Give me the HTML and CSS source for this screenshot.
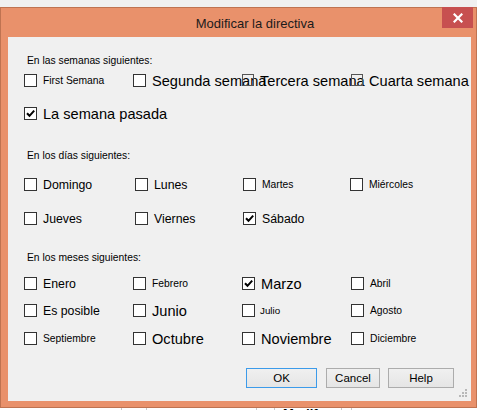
FILE: index.html
```html
<!DOCTYPE html>
<html lang="es">
<head>
<meta charset="utf-8">
<title>Modificar la directiva</title>
<link rel="stylesheet" href="styles.css">
</head>
<body>
<div class="page">
  <div class="topstrip"></div>
  <div class="window">
    <div class="titlebar">
      <span class="title">Modificar la directiva</span>
      <button class="close" aria-label="Cerrar">
        <svg width="10" height="10" viewBox="0 0 10 10"><path d="M1.5 1.5 L8.5 8.5 M8.5 1.5 L1.5 8.5" stroke="#fff" stroke-width="2.2" stroke-linecap="square"/></svg>
      </button>
    </div>
    <div class="client">
      <div class="hdr h1">En las semanas siguientes:</div>
      <div class="grid r-w1">
        <label class="item"><span class="cb"></span><span class="s">First Semana</span></label>
        <label class="item"><span class="cb"></span><span class="l">Segunda semana</span></label>
        <label class="item"><span class="cb ghost"></span><span class="l">Tercera semana</span></label>
        <label class="item"><span class="cb ghost"></span><span class="l">Cuarta semana</span></label>
      </div>
      <div class="grid r-w2">
        <label class="item"><span class="cb"><svg viewBox="0 0 11 11" width="11" height="11"><path d="M2 5.2 L4.5 7.8 L9.2 2.6" fill="none" stroke="#000" stroke-width="2"/></svg></span><span class="l">La semana pasada</span></label>
      </div>

      <div class="hdr h2">En los días siguientes:</div>
      <div class="grid days r-d1">
        <label class="item"><span class="cb"></span><span class="m">Domingo</span></label>
        <label class="item"><span class="cb"></span><span class="m">Lunes</span></label>
        <label class="item"><span class="cb"></span><span class="s">Martes</span></label>
        <label class="item"><span class="cb"></span><span class="s">Miércoles</span></label>
      </div>
      <div class="grid days r-d2">
        <label class="item"><span class="cb"></span><span class="m">Jueves</span></label>
        <label class="item"><span class="cb"></span><span class="m">Viernes</span></label>
        <label class="item"><span class="cb"><svg viewBox="0 0 11 11" width="11" height="11"><path d="M2 5.2 L4.5 7.8 L9.2 2.6" fill="none" stroke="#000" stroke-width="2"/></svg></span><span class="m">Sábado</span></label>
      </div>

      <div class="hdr h3">En los meses siguientes:</div>
      <div class="grid r-m1">
        <label class="item"><span class="cb"></span><span class="m">Enero</span></label>
        <label class="item"><span class="cb"></span><span class="s">Febrero</span></label>
        <label class="item"><span class="cb"><svg viewBox="0 0 11 11" width="11" height="11"><path d="M2 5.2 L4.5 7.8 L9.2 2.6" fill="none" stroke="#000" stroke-width="2"/></svg></span><span class="l">Marzo</span></label>
        <label class="item"><span class="cb"></span><span class="s">Abril</span></label>
      </div>
      <div class="grid r-m2">
        <label class="item"><span class="cb"></span><span class="m">Es posible</span></label>
        <label class="item"><span class="cb"></span><span class="l">Junio</span></label>
        <label class="item"><span class="cb"></span><span class="s xs">Julio</span></label>
        <label class="item"><span class="cb"></span><span class="s">Agosto</span></label>
      </div>
      <div class="grid r-m3">
        <label class="item"><span class="cb"></span><span class="s">Septiembre</span></label>
        <label class="item"><span class="cb"></span><span class="l">Octubre</span></label>
        <label class="item"><span class="cb"></span><span class="l">Noviembre</span></label>
        <label class="item"><span class="cb"></span><span class="s">Diciembre</span></label>
      </div>

      <div class="buttons">
        <button class="btn btn-ok">OK</button>
        <button class="btn btn-cancel">Cancel</button>
        <button class="btn btn-help">Help</button>
      </div>
      <svg class="grip" width="8" height="8" viewBox="0 0 8 8">
        <rect x="6" y="0" width="2" height="2" fill="#b8b8b8"/>
        <rect x="3" y="3" width="2" height="2" fill="#b8b8b8"/>
        <rect x="6" y="3" width="2" height="2" fill="#b8b8b8"/>
        <rect x="0" y="6" width="2" height="2" fill="#b8b8b8"/>
        <rect x="3" y="6" width="2" height="2" fill="#b8b8b8"/>
        <rect x="6" y="6" width="2" height="2" fill="#b8b8b8"/>
      </svg>
    </div>
  </div>
  <div class="below">
    <span class="seg seg1"></span>
    <span class="seg seg2"></span>
    <span class="seg seg3"></span>
    <span class="seg seg4"></span>
    <span class="seg seg5"><span class="peek">Modif</span></span>
    <span class="seg seg6"></span>
  </div>
</div>
</body>
</html>
```

FILE: styles.css
```css
* { box-sizing: border-box; }
html, body { margin: 0; padding: 0; }
body {
  background: #ffffff;
  font-family: "Liberation Sans", Arial, sans-serif;
  color: #000;
}
.page {
  width: 477px;
  height: 410px;
  display: flex;
  flex-direction: column;
  overflow: hidden;
}
.topstrip {
  height: 7px;
  background: #f0f0f0;
  flex: none;
}
.window {
  flex: none;
  width: 477px;
  height: 401px;
  background: #e9916b;
  border: 1px solid #bf7351;
  padding: 0 5px 6px 7px;
  display: flex;
  flex-direction: column;
}
.titlebar {
  position: relative;
  height: 29px;
  flex: none;
  display: flex;
  justify-content: center;
  padding-left: 31px;
  padding-top: 3px;
}
.title {
  font-size: 13px;
  line-height: 26px;
  color: #1b1b1b;
}
.close {
  position: absolute;
  top: -1px;
  right: -2px;
  width: 31px;
  height: 21px;
  border: 0;
  padding: 0;
  margin: 0;
  background: #c75050;
  display: flex;
  align-items: center;
  justify-content: center;
}
.client {
  position: relative;
  flex: 1;
  background: #f0f0f0;
  padding-left: 16px;
  display: flex;
  flex-direction: column;
}
.hdr {
  font-size: 10.3px;
  line-height: 13px;
  height: 13px;
  padding-left: 3px;
  white-space: nowrap;
}
.h1 { margin-top: 17px; }
.h2 { margin-top: 29px; }
.h3 { margin-top: 26px; }

.grid {
  display: grid;
  grid-template-columns: 109px 109px 109px 109px;
  height: 13px;
}
.grid.days { grid-template-columns: 111px 108px 107px 107px; }
.r-w1 { margin-top: 7px; }
.r-w2 { margin-top: 20px; }
.r-d1 { margin-top: 16px; }
.r-d2 { margin-top: 21px; }
.r-m1 { margin-top: 13px; }
.r-m2 { margin-top: 14px; }
.r-m3 { margin-top: 15px; }

.item {
  display: flex;
  align-items: center;
  height: 13px;
  gap: 6px;
  white-space: nowrap;
  min-width: 0;
}
.cb {
  flex: none;
  width: 13px;
  height: 13px;
  border: 1px solid #333;
  background: #fff;
  display: flex;
  align-items: center;
  justify-content: center;
}
.cb.ghost {
  width: 12px;
  height: 12px;
  margin-top: -2px;
  border-color: #555;
  background: transparent;
}
.s { font-size: 10.3px; }
.s.xs { font-size: 9.8px; margin-left: -1px; }
.m { font-size: 12.3px; }
.l { font-size: 14.6px; }

.buttons {
  margin-top: 23px;
  display: flex;
  justify-content: flex-end;
  padding-right: 17px;
  gap: 9px;
}
.btn {
  height: 20px;
  margin: 0;
  padding: 0;
  font-family: "Liberation Sans", Arial, sans-serif;
  font-size: 11.5px;
  color: #000;
  background: linear-gradient(#f0f0f0, #e5e5e5);
  border: 1px solid #acacac;
  border-radius: 0;
}
.btn-ok { width: 71px; border-color: #3c9bea; }
.btn-cancel { width: 54px; }
.btn-help { width: 66px; margin-left: -1px; }
.grip {
  position: absolute;
  right: 4px;
  bottom: 4px;
}

.below {
  flex: none;
  height: 2px;
  display: flex;
  background: #fff;
}
.seg { height: 2px; border-right: 1px solid #c8c8c8; }
.seg1 { width: 122px; }
.seg2 { width: 25px; }
.seg3 { width: 110px; }
.seg4 { width: 18px; }
.seg5 { width: 67px; position: relative; overflow: hidden; }
.seg6 { width: 10px; }
.peek {
  position: absolute;
  left: 8px;
  top: -1px;
  font-size: 13px;
  line-height: 13px;
  font-weight: bold;
}
```
